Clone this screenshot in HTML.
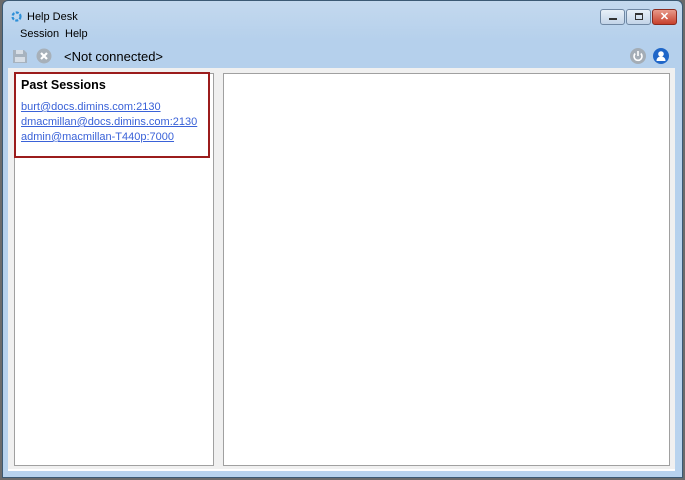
<!DOCTYPE html>
<html><head><style>
*{margin:0;padding:0;box-sizing:border-box}
body{width:685px;height:480px;background:#6b6b6b;position:relative;overflow:hidden;font-family:"Liberation Sans",sans-serif}
.win{position:absolute;left:2px;top:0;width:681px;height:478px;background:linear-gradient(#c4d9ee,#b5d0ec 40px,#b8d3ee);border:1px solid #3c5a74;border-radius:6px 6px 0 0}
.client{position:absolute;left:5px;top:67px;width:667px;height:401px;background:#f0f0f0}
.title{position:absolute;left:24px;top:10px;font-size:11px;color:#000}
.menu{position:absolute;top:27px;font-size:11px}
.btn{position:absolute;top:8px;height:16px;border:1px solid #6f87a3;border-radius:3px;background:linear-gradient(#e8f0f8,#c3d4e8)}
.panel{position:absolute;background:#fff;border:1px solid #a0a0a0}
a{color:#3a62d8;text-decoration:underline;font-size:11px;display:block;line-height:15px}
</style></head><body>
<div class="win">
<svg style="position:absolute;left:8px;top:10px" width="11" height="11" viewBox="0 0 11 11"><circle cx="5.5" cy="5.5" r="4" fill="none" stroke="#2c8fd8" stroke-width="2.2" stroke-dasharray="3 1.5"/></svg>
<div class="title">Help Desk</div>
<div class="menu" style="left:17px">Session</div>
<div class="menu" style="left:62px">Help</div>
<div class="btn" style="left:597px;width:25px"><div style="position:absolute;left:8px;top:8px;width:8px;height:2px;background:#333"></div></div>
<div class="btn" style="left:623px;width:25px"><div style="position:absolute;left:8px;top:3px;width:8px;height:7px;border:1px solid #333;border-top-width:2px"></div></div>
<div class="btn" style="left:649px;width:25px;background:linear-gradient(#e89a8a,#c7402c);border-color:#8a2a1e;color:#fff;font-size:11px;font-weight:bold;text-align:center;line-height:14px">✕</div>
<svg style="position:absolute;left:9px;top:47px" width="16" height="16" viewBox="0 0 16 16"><path d="M1 2h11l3 3v10H1z" fill="#a7b3bf"/><rect x="4" y="2" width="7" height="4" fill="#d7dee6"/><rect x="3" y="9" width="10" height="5" fill="#d7dee6"/></svg>
<svg style="position:absolute;left:33px;top:47px" width="16" height="16" viewBox="0 0 16 16"><circle cx="8" cy="8" r="7.5" fill="#a7b0b9"/><path d="M5 5l6 6M11 5l-6 6" stroke="#fff" stroke-width="2.2"/></svg>
<div style="position:absolute;left:61px;top:48px;font-size:13px">&lt;Not connected&gt;</div>
<svg style="position:absolute;left:627px;top:47px" width="16" height="16" viewBox="0 0 16 16"><circle cx="8" cy="8" r="8" fill="#a4adb6"/><path d="M5.2 5.5a4 4 0 1 0 5.6 0" fill="none" stroke="#fff" stroke-width="1.6"/><path d="M8 3v5" stroke="#fff" stroke-width="1.6"/></svg>
<svg style="position:absolute;left:650px;top:47px" width="16" height="16" viewBox="0 0 16 16"><circle cx="8" cy="8" r="8" fill="#1f66c8"/><circle cx="8" cy="6" r="2.8" fill="#fff"/><path d="M3.5 13c0-3 2-4.5 4.5-4.5s4.5 1.5 4.5 4.5z" fill="#fff"/></svg>
<div class="client">
<div class="panel" style="left:6px;top:5px;width:200px;height:393px"></div>
<div style="position:absolute;left:6px;top:4px;width:196px;height:86px;border:2px solid #9b1c1c;background:#fff;padding:4px 5px">
<div style="font-weight:bold;font-size:12.5px;margin-bottom:8px">Past Sessions</div>
<a>burt@docs.dimins.com:2130</a>
<a>dmacmillan@docs.dimins.com:2130</a>
<a>admin@macmillan-T440p:7000</a>
</div>
<div class="panel" style="left:215px;top:5px;width:447px;height:393px"></div>
</div>
<div style="position:absolute;left:5px;top:468px;width:667px;height:2px;background:#fff"></div>
</div>
</body></html>
